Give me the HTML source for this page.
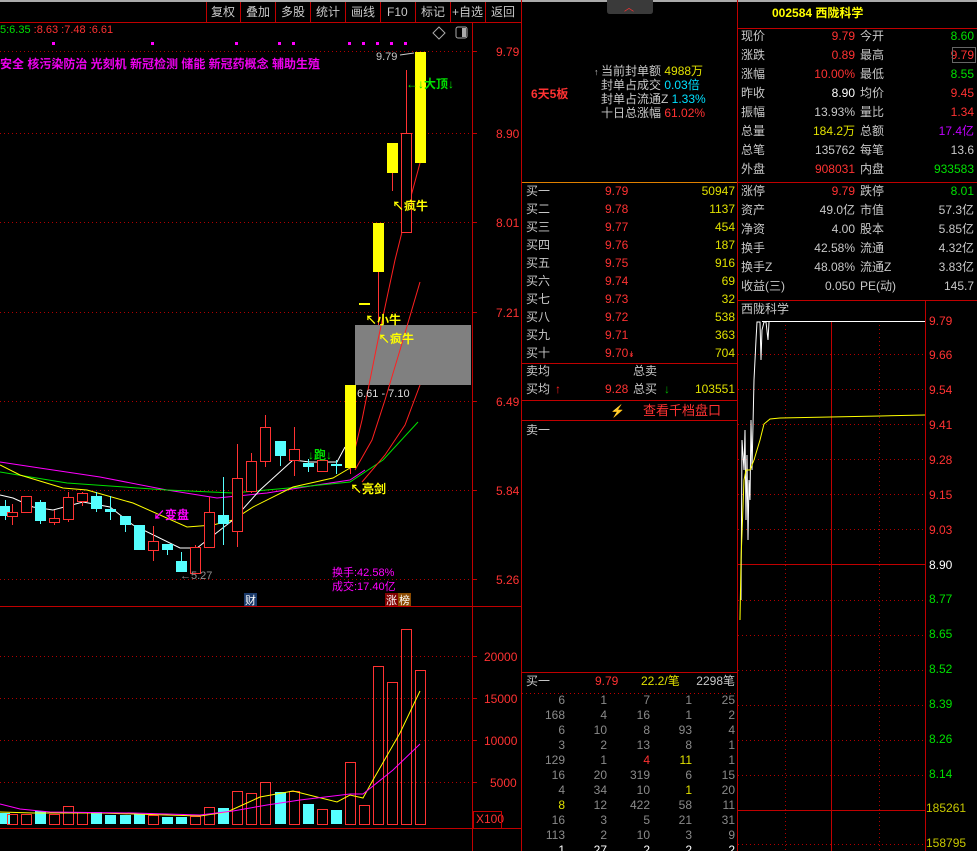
<!DOCTYPE html>
<html><head><meta charset="utf-8"><style>
html,body{margin:0;padding:0;background:#000;width:977px;height:851px;overflow:hidden}
svg{display:block}
text{font-family:"Liberation Sans","Noto Sans CJK SC",sans-serif;font-size:12px}
.w{fill:#c8c8c8}.r{fill:#ff3232}.y{fill:#e0e000}.g{fill:#00e000}.gr{fill:#909090}.m{fill:#ff00ff}.c{fill:#00e0ff}
.e{text-anchor:end}
</style></head><body>
<svg width="977" height="851" viewBox="0 0 977 851" xmlns="http://www.w3.org/2000/svg">
<rect width="977" height="851" fill="#000"/>
<rect x="0" y="0" width="977" height="2" fill="#aaa"/>
<!-- toolbar -->
<g stroke="#c00000" stroke-width="1">
<line x1="0" y1="22.5" x2="521" y2="22.5"/>
<line x1="206.5" y1="2" x2="206.5" y2="22"/><line x1="240.5" y1="2" x2="240.5" y2="22"/><line x1="275.5" y1="2" x2="275.5" y2="22"/><line x1="310.5" y1="2" x2="310.5" y2="22"/><line x1="345.5" y1="2" x2="345.5" y2="22"/><line x1="380.5" y1="2" x2="380.5" y2="22"/><line x1="415.5" y1="2" x2="415.5" y2="22"/><line x1="450.5" y1="2" x2="450.5" y2="22"/><line x1="485.5" y1="2" x2="485.5" y2="22"/>
<line x1="521.5" y1="0" x2="521.5" y2="851"/>
<line x1="472.5" y1="22" x2="472.5" y2="851"/>
<line x1="0" y1="606.5" x2="521" y2="606.5"/>
<line x1="0" y1="828.5" x2="521" y2="828.5"/>
</g>
<g class="w" style="font-size:12px">
<text x="211" y="16">复权</text><text x="246" y="16">叠加</text><text x="281" y="16">多股</text><text x="316" y="16">统计</text><text x="351" y="16">画线</text><text x="387" y="16">F10</text><text x="421" y="16">标记</text><text x="452" y="16">+自选</text><text x="491" y="16">返回</text>
</g>
<!-- price grid -->
<g stroke="#b00000" stroke-dasharray="1,3">
<line x1="0" y1="51.5" x2="472" y2="51.5"/><line x1="0" y1="133.5" x2="472" y2="133.5"/><line x1="0" y1="222.5" x2="472" y2="222.5"/><line x1="0" y1="312.5" x2="472" y2="312.5"/><line x1="0" y1="401.5" x2="472" y2="401.5"/><line x1="0" y1="490.5" x2="472" y2="490.5"/><line x1="0" y1="579.5" x2="472" y2="579.5"/>
<line x1="0" y1="656.5" x2="472" y2="656.5"/><line x1="0" y1="698.5" x2="472" y2="698.5"/><line x1="0" y1="740.5" x2="472" y2="740.5"/><line x1="0" y1="782.5" x2="472" y2="782.5"/>
</g>
<g stroke="#c00000"><line x1="472" y1="51.5" x2="477" y2="51.5"/><line x1="472" y1="133.5" x2="477" y2="133.5"/><line x1="472" y1="222.5" x2="477" y2="222.5"/><line x1="472" y1="312.5" x2="477" y2="312.5"/><line x1="472" y1="401.5" x2="477" y2="401.5"/><line x1="472" y1="490.5" x2="477" y2="490.5"/><line x1="472" y1="579.5" x2="477" y2="579.5"/><line x1="472" y1="656.5" x2="477" y2="656.5"/><line x1="472" y1="698.5" x2="477" y2="698.5"/><line x1="472" y1="740.5" x2="477" y2="740.5"/><line x1="472" y1="782.5" x2="477" y2="782.5"/></g>
<g class="r" style="font-size:12px">
<text x="496" y="56">9.79</text><text x="496" y="138">8.90</text><text x="496" y="227">8.01</text><text x="496" y="317">7.21</text><text x="496" y="406">6.49</text><text x="496" y="495">5.84</text><text x="496" y="584">5.26</text>
<text x="484" y="661">20000</text><text x="484" y="703">15000</text><text x="484" y="745">10000</text><text x="490" y="787">5000</text>
<text x="476" y="823">X100</text>
</g>
<rect x="473.5" y="811.5" width="28" height="17" fill="none" stroke="#c00000"/>
<!-- header texts -->
<text x="0" y="33" style="font-size:11px"><tspan fill="#00e000">5:6.35</tspan><tspan fill="#ff3232"> :8.63 :7.48 :6.61</tspan></text>
<g fill="#ff00ff"><rect x="52" y="42" width="3" height="3"/><rect x="151" y="42" width="3" height="3"/><rect x="235" y="42" width="3" height="3"/><rect x="278" y="42" width="3" height="3"/><rect x="292" y="42" width="3" height="3"/><rect x="348" y="42" width="3" height="3"/><rect x="362" y="42" width="3" height="3"/><rect x="376" y="42" width="3" height="3"/><rect x="390" y="42" width="3" height="3"/><rect x="404" y="42" width="3" height="3"/></g>
<text x="0" y="68" fill="#ee00ee" style="font-size:12px;font-weight:bold">安全 核污染防治 光刻机 新冠检测 储能 新冠药概念 辅助生殖</text>
<path d="M439 27 L445 33 L439 39 L433 33 Z" fill="none" stroke="#aaa"/>
<rect x="456" y="27" width="11" height="11" fill="none" stroke="#aaa" rx="2"/><rect x="462" y="28" width="4" height="9" fill="#aaa"/>
<!-- gray box -->
<rect x="355" y="325" width="116" height="60" fill="#808080"/>
<!-- MA lines -->
<polyline fill="none" stroke="#ff00ff" stroke-width="1" points="0,462 33,467 100,477 167,490 217,498 267,493 317,485 350,480 365,470"/>
<polyline fill="none" stroke="#00e000" stroke-width="1" points="0,472 67,483 167,490 233,493 300,487 350,482 383,460 418,422"/>
<polyline fill="none" stroke="#ffff00" stroke-width="1" points="0,465 20,475 63,488 87,490 133,503 187,527 213,525 233,520 253,507 293,487 333,478 350,468"/>
<polyline fill="none" stroke="#ffffff" stroke-width="1" points="0,495 13,498 33,507 53,510 83,502 110,507 133,525 180,548 197,548 233,520 260,490 293,460 310,462 337,462 345,447"/>
<polyline fill="none" stroke="#ff2020" points="350,470 362,420 378,340 395,260 410,200 420,163"/>
<polyline fill="none" stroke="#ff2020" points="355,470 372,440 385,400 400,350 420,282"/>
<polyline fill="none" stroke="#ff2020" points="362,482 385,455 405,425 420,385"/>
<!-- candles -->
<g fill="#55ffff" stroke="#55ffff">
<line x1="5.5" y1="500" x2="5.5" y2="520"/><rect x="0" y="506" width="10" height="10" stroke="none"/>
<line x1="40.5" y1="500" x2="40.5" y2="524"/><rect x="35" y="502" width="11" height="19" stroke="none"/>
<line x1="96.5" y1="492" x2="96.5" y2="512"/><rect x="91" y="496" width="11" height="13" stroke="none"/>
<line x1="110.5" y1="496" x2="110.5" y2="520"/><rect x="105" y="509" width="11" height="3" stroke="none"/>
<line x1="125.5" y1="516" x2="125.5" y2="532"/><rect x="120" y="516" width="11" height="9" stroke="none"/>
<rect x="134" y="525" width="11" height="25" stroke="none"/>
<line x1="167.5" y1="544" x2="167.5" y2="555"/><rect x="162" y="544" width="11" height="6" stroke="none"/>
<line x1="181.5" y1="552" x2="181.5" y2="572"/><rect x="176" y="561" width="11" height="11" stroke="none"/>
<line x1="223.5" y1="477" x2="223.5" y2="545"/><rect x="218" y="515" width="11" height="9" stroke="none"/>
<line x1="280.5" y1="441" x2="280.5" y2="466"/><rect x="275" y="441" width="11" height="15" stroke="none"/>
<line x1="308.5" y1="459" x2="308.5" y2="472"/><rect x="303" y="463" width="11" height="4" stroke="none"/>
<line x1="336.5" y1="460" x2="336.5" y2="474"/><rect x="331" y="464" width="11" height="2" stroke="none"/>
</g>
<g fill="#000" stroke="#ff3232">
<line x1="12.5" y1="504" x2="12.5" y2="525"/><rect x="7.5" y="512.5" width="10" height="4"/>
<rect x="21.5" y="496.5" width="10" height="16"/>
<line x1="54.5" y1="510" x2="54.5" y2="525"/><rect x="49.5" y="518.5" width="10" height="4"/>
<line x1="68.5" y1="492" x2="68.5" y2="522"/><rect x="63.5" y="497.5" width="10" height="22"/>
<line x1="82.5" y1="492" x2="82.5" y2="506"/><rect x="77.5" y="493.5" width="10" height="8"/>
<line x1="153.5" y1="526" x2="153.5" y2="561"/><rect x="148.5" y="541.5" width="10" height="9"/>
<line x1="195.5" y1="545" x2="195.5" y2="573"/><rect x="190.5" y="547.5" width="10" height="26"/>
<line x1="209.5" y1="497" x2="209.5" y2="547"/><rect x="204.5" y="512.5" width="10" height="35"/>
<line x1="237.5" y1="444" x2="237.5" y2="547"/><rect x="232.5" y="478.5" width="10" height="53"/>
<line x1="251.5" y1="453" x2="251.5" y2="493"/><rect x="246.5" y="461.5" width="10" height="30"/>
<line x1="265.5" y1="415" x2="265.5" y2="467"/><rect x="260.5" y="427.5" width="10" height="34"/>
<line x1="294.5" y1="427" x2="294.5" y2="476"/><rect x="289.5" y="449.5" width="10" height="11"/>
<rect x="317.5" y="460.5" width="10" height="11"/>
<line x1="406.5" y1="70" x2="406.5" y2="133"/><rect x="401.5" y="133.5" width="10" height="99"/>
<line x1="378.5" y1="272" x2="378.5" y2="325"/>
<line x1="350.5" y1="468" x2="350.5" y2="474"/>
<line x1="392.5" y1="173" x2="392.5" y2="191"/>
</g>
<g fill="#ffff00">
<rect x="345" y="385" width="11" height="83"/>
<rect x="359" y="303" width="11" height="2"/>
<rect x="373" y="223" width="11" height="49"/>
<rect x="387" y="143" width="11" height="30"/>
<rect x="415" y="52" width="11" height="111"/>
</g>
<!-- chart annotations -->
<text x="376" y="60" class="w" style="font-size:11px">9.79</text>
<line x1="400" y1="55" x2="414" y2="53" stroke="#ccc"/>
<text x="406" y="88" fill="#00e000" style="font-size:12px;font-weight:bold">←↓大顶↓</text>
<text x="392" y="210" fill="#ffff00" style="font-size:12px;font-weight:bold">↖疯牛</text>
<text x="365" y="324" fill="#ffff00" style="font-size:12px;font-weight:bold">↖小牛</text>
<text x="378" y="343" fill="#ffff00" style="font-size:12px;font-weight:bold">↖疯牛</text>
<text x="357" y="397" fill="#ddd" style="font-size:11px">6.61 - 7.10</text>
<text x="308" y="459" fill="#00e000" style="font-size:12px;font-weight:bold">↓跑↓</text>
<text x="350" y="493" fill="#ffff00" style="font-size:12px;font-weight:bold">↖亮剑</text>
<text x="153" y="519" fill="#ff00ff" style="font-size:12px;font-weight:bold">↙变盘</text>
<text x="180" y="579" class="gr" style="font-size:11px">←5.27</text>
<text x="332" y="576" fill="#ff00ff" style="font-size:11px">换手:42.58%</text>
<text x="332" y="590" fill="#ff00ff" style="font-size:11px">成交:17.40亿</text>
<rect x="244" y="593" width="13" height="13" fill="#1a3a6a"/><text x="245" y="604" fill="#fff" style="font-size:11px">财</text>
<rect x="385" y="593" width="13" height="13" fill="#800000"/><text x="386" y="604" fill="#fff" style="font-size:11px">涨</text>
<rect x="398" y="593" width="13" height="13" fill="#8a4a00"/><text x="399" y="604" fill="#fff" style="font-size:11px">榜</text>
<!-- volume bars -->
<g fill="#55ffff">
<rect x="0" y="813" width="10" height="11"/><rect x="35" y="811" width="11" height="13"/><rect x="91" y="812" width="11" height="12"/><rect x="105" y="815" width="11" height="9"/><rect x="120" y="815" width="11" height="9"/><rect x="134" y="814" width="11" height="10"/><rect x="162" y="817" width="11" height="7"/><rect x="176" y="817" width="11" height="7"/><rect x="218" y="808" width="11" height="16"/><rect x="275" y="792" width="11" height="32"/><rect x="303" y="804" width="11" height="20"/><rect x="331" y="810" width="11" height="14"/>
</g>
<g fill="none" stroke="#ff3232">
<rect x="7.5" y="814.5" width="10" height="10"/><rect x="21.5" y="814.5" width="10" height="10"/><rect x="49.5" y="814.5" width="10" height="10"/><rect x="63.5" y="806.5" width="10" height="18"/><rect x="77.5" y="812.5" width="10" height="12"/><rect x="148.5" y="815.5" width="10" height="9"/><rect x="190.5" y="816.5" width="10" height="8"/><rect x="204.5" y="807.5" width="10" height="17"/><rect x="232.5" y="791.5" width="10" height="33"/><rect x="246.5" y="793.5" width="10" height="31"/><rect x="260.5" y="782.5" width="10" height="42"/><rect x="289.5" y="791.5" width="10" height="33"/><rect x="317.5" y="809.5" width="10" height="15"/><rect x="345.5" y="762.5" width="10" height="62"/><rect x="359.5" y="805.5" width="10" height="19"/><rect x="373.5" y="666.5" width="10" height="158"/><rect x="387.5" y="682.5" width="10" height="142"/><rect x="401.5" y="629.5" width="10" height="195"/><rect x="415.5" y="670.5" width="10" height="154"/>
</g>
<polyline fill="none" stroke="#ffff00" points="0,812 33,813 100,813 167,815 200,816 227,812 260,797 293,791 337,802 350,795 363,798 373,780 400,733 420,691"/>
<polyline fill="none" stroke="#ff00ff" points="0,804 20,809 50,812 133,813 200,815 233,811 267,805 300,800 350,794 363,794 393,770 420,744"/>

<!-- middle panel -->
<path d="M607 0 H653 V11 Q653 14 650 14 H610 Q607 14 607 11 Z" fill="#3a3a3a"/>
<text x="624" y="11" class="r" style="font-size:10px">︿</text>
<text x="531" y="98" fill="#ff3232" style="font-size:12px;font-weight:bold">6天5板</text>
<text x="594" y="75" class="w" style="font-size:9px">↑</text>
<text x="601" y="75" class="w">当前封单额 <tspan class="y">4988万</tspan></text>
<text x="601" y="89" class="w">封单占成交 <tspan class="c">0.03倍</tspan></text>
<text x="601" y="103" class="w">封单占流通Z <tspan class="c">1.33%</tspan></text>
<text x="601" y="117" class="w">十日总涨幅 <tspan class="r">61.02%</tspan></text>
<line x1="522" y1="182.5" x2="737" y2="182.5" stroke="#e08000"/>
<line x1="737.5" y1="0" x2="737.5" y2="851" stroke="#c00000"/>
<g class="w"><text x="526" y="195">买一</text><text x="526" y="213">买二</text><text x="526" y="231">买三</text><text x="526" y="249">买四</text><text x="526" y="267">买五</text><text x="526" y="285">买六</text><text x="526" y="303">买七</text><text x="526" y="321">买八</text><text x="526" y="339">买九</text><text x="526" y="357">买十</text></g>
<g class="r"><text x="605" y="195">9.79</text><text x="605" y="213">9.78</text><text x="605" y="231">9.77</text><text x="605" y="249">9.76</text><text x="605" y="267">9.75</text><text x="605" y="285">9.74</text><text x="605" y="303">9.73</text><text x="605" y="321">9.72</text><text x="605" y="339">9.71</text><text x="605" y="357">9.70</text><text x="628" y="357" style="font-size:8px">↡</text></g>
<g class="y e"><text x="735" y="195">50947</text><text x="735" y="213">1137</text><text x="735" y="231">454</text><text x="735" y="249">187</text><text x="735" y="267">916</text><text x="735" y="285">69</text><text x="735" y="303">32</text><text x="735" y="321">538</text><text x="735" y="339">363</text><text x="735" y="357">704</text></g>
<g stroke="#c00000"><line x1="522" y1="363.5" x2="737" y2="363.5"/><line x1="522" y1="400.5" x2="737" y2="400.5"/><line x1="522" y1="420.5" x2="737" y2="420.5"/><line x1="522" y1="672.5" x2="737" y2="672.5"/></g>
<text x="526" y="375" class="w">卖均</text><text x="633" y="375" class="w">总卖</text>
<text x="526" y="393" class="w">买均</text><text x="555" y="393" fill="#ff2020" style="font-weight:bold">↑</text><text x="605" y="393" class="r">9.28</text>
<text x="633" y="393" class="w">总买</text><text x="664" y="393" fill="#00b000" style="font-weight:bold">↓</text><text x="735" y="393" class="y e">103551</text>
<text x="610" y="415" fill="#8a7a30" style="font-size:12px">⚡</text>
<text x="643" y="415" fill="#ff3232" style="font-size:13px">查看千档盘口</text>
<text x="526" y="434" class="w">卖一</text>
<text x="526" y="685" class="w">买一</text><text x="595" y="685" class="r">9.79</text><text x="641" y="685" class="y">22.2/笔</text><text x="735" y="685" class="w e">2298笔</text>
<line x1="522" y1="693.5" x2="737" y2="693.5" stroke="#c00000" stroke-dasharray="1,3"/>
<g fill="#8a8a8a" class="e">
<text x="565" y="704">6</text><text x="607" y="704">1</text><text x="650" y="704">7</text><text x="692" y="704">1</text><text x="735" y="704">25</text>
<text x="565" y="719">168</text><text x="607" y="719">4</text><text x="650" y="719">16</text><text x="692" y="719">1</text><text x="735" y="719">2</text>
<text x="565" y="734">6</text><text x="607" y="734">10</text><text x="650" y="734">8</text><text x="692" y="734">93</text><text x="735" y="734">4</text>
<text x="565" y="749">3</text><text x="607" y="749">2</text><text x="650" y="749">13</text><text x="692" y="749">8</text><text x="735" y="749">1</text>
<text x="565" y="764">129</text><text x="607" y="764">1</text><text x="650" y="764" fill="#ff3232">4</text><text x="692" y="764" fill="#e0e000">11</text><text x="735" y="764">1</text>
<text x="565" y="779">16</text><text x="607" y="779">20</text><text x="650" y="779">319</text><text x="692" y="779">6</text><text x="735" y="779">15</text>
<text x="565" y="794">4</text><text x="607" y="794">34</text><text x="650" y="794">10</text><text x="692" y="794" fill="#e0e000">1</text><text x="735" y="794">20</text>
<text x="565" y="809" fill="#e0e000">8</text><text x="607" y="809">12</text><text x="650" y="809">422</text><text x="692" y="809">58</text><text x="735" y="809">11</text>
<text x="565" y="824">16</text><text x="607" y="824">3</text><text x="650" y="824">5</text><text x="692" y="824">21</text><text x="735" y="824">31</text>
<text x="565" y="839">113</text><text x="607" y="839">2</text><text x="650" y="839">10</text><text x="692" y="839">3</text><text x="735" y="839">9</text>
<text x="565" y="854" fill="#fff">1</text><text x="607" y="854" fill="#fff">27</text><text x="650" y="854" fill="#fff">2</text><text x="692" y="854" fill="#fff">2</text><text x="735" y="854" fill="#fff">2</text>
</g>

<!-- right panel -->
<text x="772" y="17" fill="#ffff00" style="font-size:12px;font-weight:bold">002584 西陇科学</text>
<g stroke="#c00000"><line x1="738" y1="28.5" x2="977" y2="28.5"/><line x1="738" y1="182.5" x2="977" y2="182.5"/><line x1="738" y1="300.5" x2="977" y2="300.5"/></g>
<g class="w"><text x="741" y="40">现价</text><text x="741" y="59">涨跌</text><text x="741" y="78">涨幅</text><text x="741" y="97">昨收</text><text x="741" y="116">振幅</text><text x="741" y="135">总量</text><text x="741" y="154">总笔</text><text x="741" y="173">外盘</text>
<text x="860" y="40">今开</text><text x="860" y="59">最高</text><text x="860" y="78">最低</text><text x="860" y="97">均价</text><text x="860" y="116">量比</text><text x="860" y="135">总额</text><text x="860" y="154">每笔</text><text x="860" y="173">内盘</text>
<text x="741" y="195">涨停</text><text x="741" y="214">资产</text><text x="741" y="233">净资</text><text x="741" y="252">换手</text><text x="741" y="271">换手Z</text><text x="741" y="290">收益(三)</text>
<text x="860" y="195">跌停</text><text x="860" y="214">市值</text><text x="860" y="233">股本</text><text x="860" y="252">流通</text><text x="860" y="271">流通Z</text><text x="860" y="290">PE(动)</text>
<text x="741" y="313">西陇科学</text></g>
<g class="e">
<text x="855" y="40" class="r">9.79</text><text x="855" y="59" class="r">0.89</text><text x="855" y="78" class="r">10.00%</text><text x="855" y="97" fill="#fff">8.90</text><text x="855" y="116" class="w">13.93%</text><text x="855" y="135" class="y">184.2万</text><text x="855" y="154" class="w">135762</text><text x="855" y="173" class="r">908031</text>
<text x="974" y="40" class="g">8.60</text><text x="974" y="59" class="r">9.79</text><text x="974" y="78" class="g">8.55</text><text x="974" y="97" class="r">9.45</text><text x="974" y="116" class="r">1.34</text><text x="974" y="135" fill="#c000ff">17.4亿</text><text x="974" y="154" class="w">13.6</text><text x="974" y="173" class="g">933583</text>
<text x="855" y="195" class="r">9.79</text><text x="855" y="214" class="w">49.0亿</text><text x="855" y="233" class="w">4.00</text><text x="855" y="252" class="w">42.58%</text><text x="855" y="271" class="w">48.08%</text><text x="855" y="290" class="w">0.050</text>
<text x="974" y="195" class="g">8.01</text><text x="974" y="214" class="w">57.3亿</text><text x="974" y="233" class="w">5.85亿</text><text x="974" y="252" class="w">4.32亿</text><text x="974" y="271" class="w">3.83亿</text><text x="974" y="290" class="w">145.7</text>
</g>
<rect x="952.5" y="47.5" width="23" height="15" fill="none" stroke="#666"/>
<!-- intraday -->
<g stroke="#b00000" stroke-dasharray="1,3">
<line x1="738" y1="354.5" x2="925" y2="354.5"/><line x1="738" y1="389.5" x2="925" y2="389.5"/><line x1="738" y1="424.5" x2="925" y2="424.5"/><line x1="738" y1="459.5" x2="925" y2="459.5"/><line x1="738" y1="494.5" x2="925" y2="494.5"/><line x1="738" y1="529.5" x2="925" y2="529.5"/><line x1="738" y1="600.5" x2="925" y2="600.5"/><line x1="738" y1="635.5" x2="925" y2="635.5"/><line x1="738" y1="670.5" x2="925" y2="670.5"/><line x1="738" y1="705.5" x2="925" y2="705.5"/><line x1="738" y1="740.5" x2="925" y2="740.5"/><line x1="738" y1="775.5" x2="925" y2="775.5"/><line x1="738" y1="844.5" x2="925" y2="844.5"/>
<line x1="785.5" y1="321" x2="785.5" y2="851"/><line x1="879.5" y1="321" x2="879.5" y2="851"/>
</g>
<g stroke="#c00000"><line x1="831.5" y1="321" x2="831.5" y2="851"/><line x1="925.5" y1="300" x2="925.5" y2="851"/><line x1="738" y1="564.5" x2="925" y2="564.5"/><line x1="738" y1="810.5" x2="925" y2="810.5"/></g>
<line x1="762" y1="321.5" x2="925" y2="321.5" stroke="#fff"/>
<polyline fill="none" stroke="#fff" points="741,600 742,440 744,470 745,430 746,520 747,455 748,540 749,480 750,500 751,420 752,470 754,380 756,340 757,322 760,322 761,360 762,330 764,322 766,322 768,340 769,322"/>
<polyline fill="none" stroke="#ffff00" points="740,620 741,560 744,480 746,470 750,470 754,460 760,440 764,424 770,419 780,418 830,417 880,416 925,415"/>
<g style="font-size:12px">
<text x="929" y="325" class="r">9.79</text><text x="929" y="359" class="r">9.66</text><text x="929" y="394" class="r">9.54</text><text x="929" y="429" class="r">9.41</text><text x="929" y="464" class="r">9.28</text><text x="929" y="499" class="r">9.15</text><text x="929" y="534" class="r">9.03</text><text x="929" y="569" fill="#fff">8.90</text>
<text x="929" y="603" class="g">8.77</text><text x="929" y="638" class="g">8.65</text><text x="929" y="673" class="g">8.52</text><text x="929" y="708" class="g">8.39</text><text x="929" y="743" class="g">8.26</text><text x="929" y="778" class="g">8.14</text>
<text x="926" y="812" fill="#c8c800">185261</text><text x="926" y="847" fill="#c8c800">158795</text>
</g>
</svg>
</body></html>
